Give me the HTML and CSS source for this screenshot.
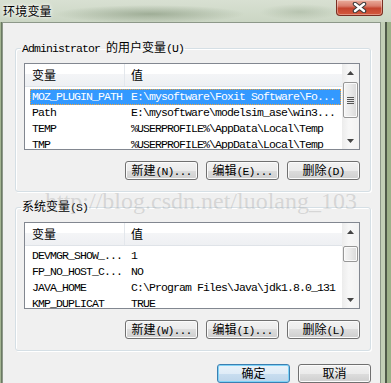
FILE: index.html
```html
<!DOCTYPE html>
<html lang="zh-CN">
<head>
  <meta charset="UTF-8">
  <meta name="viewport" content="width=device-width, initial-scale=1.0">
  <title>环境变量</title>
  <link rel="stylesheet" href="styles.css">
</head>
<body>
  <div class="window">
    <div class="titlebar">
      <span class="title">环境变量</span>
      <div class="close">
        <svg width="15" height="11" viewBox="0 0 15 11">
          <path d="M3 2 L12 9 M12 2 L3 9" stroke="#3b3b3b" stroke-width="4.5" stroke-linecap="round"/>
          <path d="M3 2 L12 9 M12 2 L3 9" stroke="#fff" stroke-width="2.4" stroke-linecap="round"/>
        </svg>
      </div>
    </div>

    <div class="frame">
      <div class="client">
        <fieldset class="group">
          <legend>Administrator <span class="zh">的用户变量</span>(U)</legend>
          <div class="list">
            <div class="list-view">
              <div class="list-head">
                <div class="col-name"><span class="zh">变量</span></div>
                <div class="col-value"><span class="zh">值</span></div>
              </div>
              <div class="row selected"><div class="cell-name">MOZ_PLUGIN_PATH</div><div class="cell-value">E:\mysoftware\Foxit Software\Fo...</div></div>
              <div class="row"><div class="cell-name">Path</div><div class="cell-value">E:\mysoftware\modelsim_ase\win3...</div></div>
              <div class="row"><div class="cell-name">TEMP</div><div class="cell-value">%USERPROFILE%\AppData\Local\Temp</div></div>
              <div class="row"><div class="cell-name">TMP</div><div class="cell-value">%USERPROFILE%\AppData\Local\Temp</div></div>
            </div>
            <div class="scrollbar">
              <div class="sb-arrow"><svg width="7" height="4" viewBox="0 0 7 4"><path d="M3.5 0 L7 4 L0 4 Z" fill="#444"/></svg></div>
              <div class="sb-thumb"><div class="grip"></div></div>
              <div class="sb-track"></div>
              <div class="sb-arrow"><svg width="7" height="4" viewBox="0 0 7 4"><path d="M0 0 L7 0 L3.5 4 Z" fill="#444"/></svg></div>
            </div>
          </div>
          <div class="buttons">
            <button><span class="zh">新建</span>(N)...</button>
            <button><span class="zh">编辑</span>(E)...</button>
            <button><span class="zh">删除</span>(D)</button>
          </div>
        </fieldset>

        <fieldset class="group group-sys">
          <legend><span class="zh">系统变量</span>(S)</legend>
          <div class="list">
            <div class="list-view">
              <div class="list-head">
                <div class="col-name"><span class="zh">变量</span></div>
                <div class="col-value"><span class="zh">值</span></div>
              </div>
              <div class="row"><div class="cell-name">DEVMGR_SHOW_...</div><div class="cell-value">1</div></div>
              <div class="row"><div class="cell-name">FP_NO_HOST_C...</div><div class="cell-value">NO</div></div>
              <div class="row"><div class="cell-name">JAVA_HOME</div><div class="cell-value">C:\Program Files\Java\jdk1.8.0_131</div></div>
              <div class="row"><div class="cell-name">KMP_DUPLICAT</div><div class="cell-value">TRUE</div></div>
            </div>
            <div class="scrollbar">
              <div class="sb-arrow"><svg width="7" height="4" viewBox="0 0 7 4"><path d="M3.5 0 L7 4 L0 4 Z" fill="#444"/></svg></div>
              <div class="sb-thumb small"><div class="grip"></div></div>
              <div class="sb-track"></div>
              <div class="sb-arrow"><svg width="7" height="4" viewBox="0 0 7 4"><path d="M0 0 L7 0 L3.5 4 Z" fill="#444"/></svg></div>
            </div>
          </div>
          <div class="buttons">
            <button><span class="zh">新建</span>(W)...</button>
            <button><span class="zh">编辑</span>(I)...</button>
            <button><span class="zh">删除</span>(L)</button>
          </div>
        </fieldset>

        <div class="dialog-buttons">
          <button class="default"><span class="zh">确定</span></button>
          <button><span class="zh">取消</span></button>
        </div>
      </div>
    </div>

    <div class="watermark">http://blog.csdn.net/luolang_103</div>
  </div>
</body>
</html>
```

FILE: styles.css
```css
* {
  box-sizing: border-box;
}
html, body {
  margin: 0;
}
body {
  width: 391px;
  height: 383px;
  overflow: hidden;
  background: #f0f0f0;
  font-family: "Liberation Mono", "Noto Sans CJK SC", monospace;
  font-size: 11.5px;
  letter-spacing: -0.9px;
  color: #000;
}
.zh {
  font-family: "Noto Sans CJK SC", sans-serif;
  font-size: 12px;
  letter-spacing: 0;
}
.window {
  position: relative;
  width: 391px;
  height: 383px;
  display: flex;
  flex-direction: column;
  background: #c9d5c2;
}
.titlebar {
  height: 25px;
  display: flex;
  align-items: flex-start;
  background:
    radial-gradient(ellipse 95px 9px at 150px 14px, rgba(100,120,90,0.45), transparent),
    radial-gradient(ellipse 40px 8px at 300px 12px, rgba(110,130,100,0.25), transparent),
    linear-gradient(#d8e0d2, #cbd6c4);
}
.title {
  margin: 3px 0 0 3px;
  font-family: "Noto Sans CJK SC", sans-serif;
  font-size: 12px;
  line-height: 16px;
  letter-spacing: 0.2px;
  text-shadow: 0 0 5px #fff, 0 0 3px #fff;
}
.close {
  margin-left: auto;
  margin-right: 8px;
  width: 47px;
  height: 16px;
  border: 1px solid #7a2e22;
  border-top: none;
  border-radius: 0 0 4px 4px;
  background: linear-gradient(#eaad9c, #d97d6c 40%, #c4442e 55%, #d45a3e);
  box-shadow: inset 0 0 0 1px rgba(255,255,255,0.35);
  display: flex;
  align-items: center;
  justify-content: center;
}
.frame {
  flex: 1;
  display: flex;
  padding: 0 10px 0 2px;
  background: linear-gradient(to right,
    #a3b592 0 1px, #6b7a63 1px 2px, transparent 2px calc(100% - 10px),
    #c2cfb6 calc(100% - 10px) calc(100% - 6px),
    #4f5a49 calc(100% - 6px) calc(100% - 4px),
    #9cb089 calc(100% - 4px));
}
.client {
  flex: 1;
  background: #f0f0f0;
  border: 1px solid #8d9889;
  border-bottom: none;
  padding: 0 9px 0 12px;
}
.group {
  margin: 17px 0 0;
  padding: 7px 10px 11px 8px;
  min-width: 0;
  border: 1px solid #d5dfe5;
  border-radius: 3px;
  box-shadow: inset 1px 1px 0 #fff, 1px 1px 0 #fff;
}
.group-sys {
  margin-top: 7px;
}
.group legend {
  padding: 0 1px;
  margin-left: -3px;
  line-height: 14px;
}
.list {
  height: 87px;
  display: flex;
  border: 1px solid #828790;
  background: #fff;
}
.list-view {
  flex: 1;
  overflow: hidden;
}
.list-head {
  height: 23px;
  display: flex;
  margin-bottom: 2px;
  line-height: 22px;
  background: linear-gradient(#fff 45%, #f4f5f7 45%, #eef0f3);
  border-bottom: 1px solid #dfe3e8;
}
.col-name {
  width: 100px;
  padding-left: 7px;
  border-right: 1px solid #e3e7ec;
}
.col-value {
  padding-left: 6px;
}
.row {
  width: 311px;
  height: 16px;
  margin-left: 5px;
  display: flex;
  line-height: 16px;
  white-space: nowrap;
}
.row.selected {
  background: #3399ff;
  color: #fff;
  outline: 1px dotted #f2a33a;
  outline-offset: -1px;
}
.cell-name {
  width: 95px;
  padding-left: 2px;
  overflow: hidden;
}
.cell-value {
  padding-left: 6px;
}
.scrollbar {
  width: 17px;
  display: flex;
  flex-direction: column;
  background: linear-gradient(to right, #ececec, #f7f7f7 40%, #f2f2f2);
}
.sb-arrow {
  height: 17px;
  display: flex;
  align-items: center;
  justify-content: center;
}
.sb-thumb {
  height: 36px;
  margin: 1px 1px 0;
  border: 1px solid #979797;
  border-radius: 2px;
  background: linear-gradient(to right, #f5f5f5, #e9e9e9 50%, #d9d9d9);
  box-shadow: inset 0 0 0 1px #fafafa;
  display: flex;
  align-items: center;
  justify-content: center;
}
.sb-thumb.small {
  height: 16px;
  margin-top: 6px;
}
.grip {
  width: 7px;
  height: 7px;
  background: repeating-linear-gradient(#555 0 1px, transparent 1px 2px);
}
.sb-thumb.small .grip {
  display: none;
}
.sb-track {
  flex: 1;
}
.buttons,
.dialog-buttons {
  display: flex;
  justify-content: flex-end;
  gap: 8px;
  margin-top: 11px;
}
.dialog-buttons {
  margin-top: 13px;
}
button {
  width: 73px;
  height: 19px;
  padding: 0;
  border: 1px solid #707070;
  border-radius: 3px;
  background: linear-gradient(#f2f2f2, #ebebeb 50%, #dddddd 50%, #cfcfcf);
  box-shadow: inset 0 0 0 1px #fbfbfb;
  font: inherit;
  letter-spacing: inherit;
  line-height: 15px;
  color: #000;
}
button.default {
  border-color: #3c7fb1;
  background: linear-gradient(#eaf3fa, #dfecf7 50%, #c9def0 50%, #bdd5ea);
  box-shadow: inset 0 0 0 1px #7fd3f7;
}
.watermark {
  position: absolute;
  left: 45px;
  top: 189px;
  font-family: "Liberation Serif", serif;
  font-size: 24px;
  line-height: 24px;
  letter-spacing: 0;
  color: rgba(150, 150, 150, 0.3);
  pointer-events: none;
}
```
